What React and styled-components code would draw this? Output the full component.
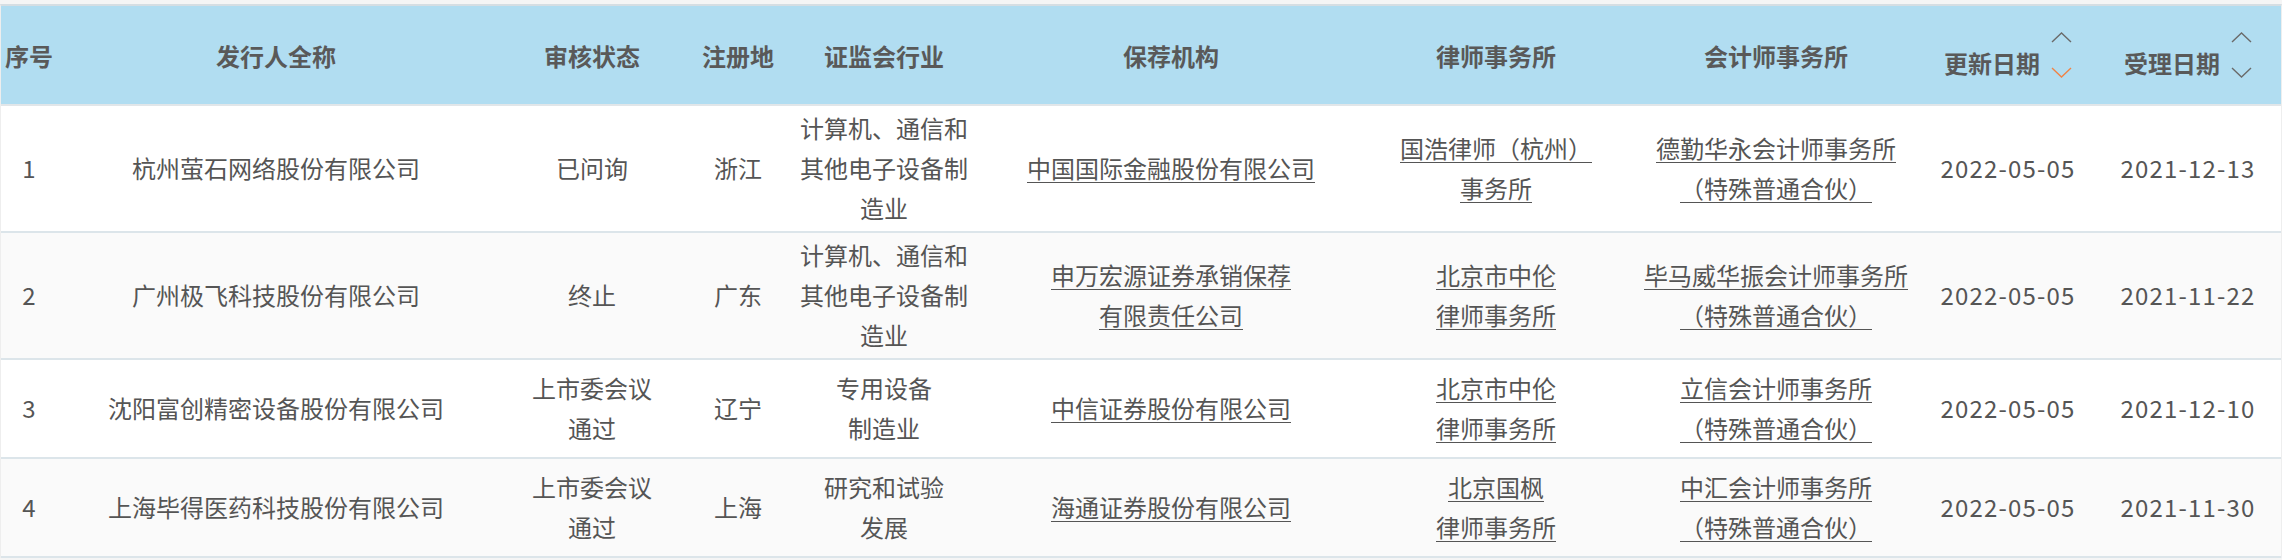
import React from "react";
import styled, { createGlobalStyle } from "styled-components";

const GlobalStyle = createGlobalStyle`
	html, body {
		margin: 0;
		padding: 0;
		background: #f5f5f5;
	}
	body {
		font-family: "Noto Sans CJK SC", "Noto Sans", sans-serif;
	}
`;

const Page = styled.div`
	padding-top: 4px;
	background: #f5f5f5;
`;

const Table = styled.table`
	width: 100%;
	table-layout: fixed;
	border-collapse: separate;
	border-spacing: 0;
	background: #fff;
	border-top: 2px solid #d6dee3;
	border-left: 1px solid #eeeeee;
	border-right: 1px solid #eeeeee;
`;

const HeadRow = styled.tr`
	background: #b1ddf1;
`;

const Th = styled.th`
	height: 98px;
	padding: 0;
	font-size: 24px;
	font-weight: 700;
	color: #595959;
	text-align: center;
	vertical-align: middle;
	white-space: nowrap;
	border-bottom: 2px solid #e1e6e9;
`;

const Row = styled.tr`
	background: ${(p) => (p.$striped ? "#fafafa" : "#fff")};
`;

const Td = styled.td`
	height: 92px;
	padding: 2px 0 3px;
	font-size: 24px;
	line-height: 40px;
	color: #555;
	text-align: center;
	vertical-align: middle;
	white-space: nowrap;
	border-bottom: 2px solid #dce5ea;
	letter-spacing: ${(p) => (p.$date ? "1.2px" : "0")};
`;

const Link = styled.a`
	color: #555;
	text-decoration: underline;
	text-underline-offset: 4px;
	text-decoration-thickness: 1px;
	cursor: pointer;
`;

const SortWrap = styled.span`
	display: inline-flex;
	align-items: center;
	gap: 11px;
`;

const SortLabel = styled.span`
	margin-top: 14px;
`;

const Carets = styled.span`
	display: flex;
	flex-direction: column;
	justify-content: space-between;
	height: 46px;
`;

const Caret = ({ down, active }) => (
	<svg width="21" height="11" viewBox="0 0 21 11">
		<path
			d={down ? "M1 1 L10.5 10 L20 1" : "M1 10 L10.5 1 L20 10"}
			fill="none"
			stroke={active ? "#f08346" : "#6a6a6a"}
			strokeWidth="1.4"
		/>
	</svg>
);

const widths = [56, 438, 194, 98, 194, 380, 270, 290, 174, 186];

const rows = [
	{
		no: 1,
		name: "杭州萤石网络股份有限公司",
		status: ["已问询"],
		region: "浙江",
		industry: ["计算机、通信和", "其他电子设备制", "造业"],
		sponsor: ["中国国际金融股份有限公司"],
		law: ["国浩律师（杭州）", "事务所"],
		acct: ["德勤华永会计师事务所", "（特殊普通合伙）"],
		updated: "2022-05-05",
		accepted: "2021-12-13",
	},
	{
		no: 2,
		name: "广州极飞科技股份有限公司",
		status: ["终止"],
		region: "广东",
		industry: ["计算机、通信和", "其他电子设备制", "造业"],
		sponsor: ["申万宏源证券承销保荐", "有限责任公司"],
		law: ["北京市中伦", "律师事务所"],
		acct: ["毕马威华振会计师事务所", "（特殊普通合伙）"],
		updated: "2022-05-05",
		accepted: "2021-11-22",
	},
	{
		no: 3,
		name: "沈阳富创精密设备股份有限公司",
		status: ["上市委会议", "通过"],
		region: "辽宁",
		industry: ["专用设备", "制造业"],
		sponsor: ["中信证券股份有限公司"],
		law: ["北京市中伦", "律师事务所"],
		acct: ["立信会计师事务所", "（特殊普通合伙）"],
		updated: "2022-05-05",
		accepted: "2021-12-10",
	},
	{
		no: 4,
		name: "上海毕得医药科技股份有限公司",
		status: ["上市委会议", "通过"],
		region: "上海",
		industry: ["研究和试验", "发展"],
		sponsor: ["海通证券股份有限公司"],
		law: ["北京国枫", "律师事务所"],
		acct: ["中汇会计师事务所", "（特殊普通合伙）"],
		updated: "2022-05-05",
		accepted: "2021-11-30",
	},
];

function Lines({ lines, link }) {
	return lines.map((line, i) => (
		<React.Fragment key={i}>
			{i > 0 && <br />}
			{link ? <Link>{line}</Link> : line}
		</React.Fragment>
	));
}

function SortHead({ label, active }) {
	return (
		<SortWrap>
			<SortLabel>{label}</SortLabel>
			<Carets>
				<Caret />
				<Caret down active={active} />
			</Carets>
		</SortWrap>
	);
}

export default function App() {
	return (
		<Page>
			<GlobalStyle />
			<Table>
				<colgroup>
					{widths.map((w, i) => (
						<col key={i} style={{ width: w }} />
					))}
				</colgroup>
				<thead>
					<HeadRow>
						<Th>序号</Th>
						<Th>发行人全称</Th>
						<Th>审核状态</Th>
						<Th>注册地</Th>
						<Th>证监会行业</Th>
						<Th>保荐机构</Th>
						<Th>律师事务所</Th>
						<Th>会计师事务所</Th>
						<Th>
							<SortHead label="更新日期" active />
						</Th>
						<Th>
							<SortHead label="受理日期" />
						</Th>
					</HeadRow>
				</thead>
				<tbody>
					{rows.map((r, i) => (
						<Row key={r.no} $striped={i % 2 === 1}>
							<Td>{r.no}</Td>
							<Td>{r.name}</Td>
							<Td>
								<Lines lines={r.status} />
							</Td>
							<Td>{r.region}</Td>
							<Td>
								<Lines lines={r.industry} />
							</Td>
							<Td>
								<Lines lines={r.sponsor} link />
							</Td>
							<Td>
								<Lines lines={r.law} link />
							</Td>
							<Td>
								<Lines lines={r.acct} link />
							</Td>
							<Td $date>{r.updated}</Td>
							<Td $date>{r.accepted}</Td>
						</Row>
					))}
				</tbody>
			</Table>
		</Page>
	);
}
